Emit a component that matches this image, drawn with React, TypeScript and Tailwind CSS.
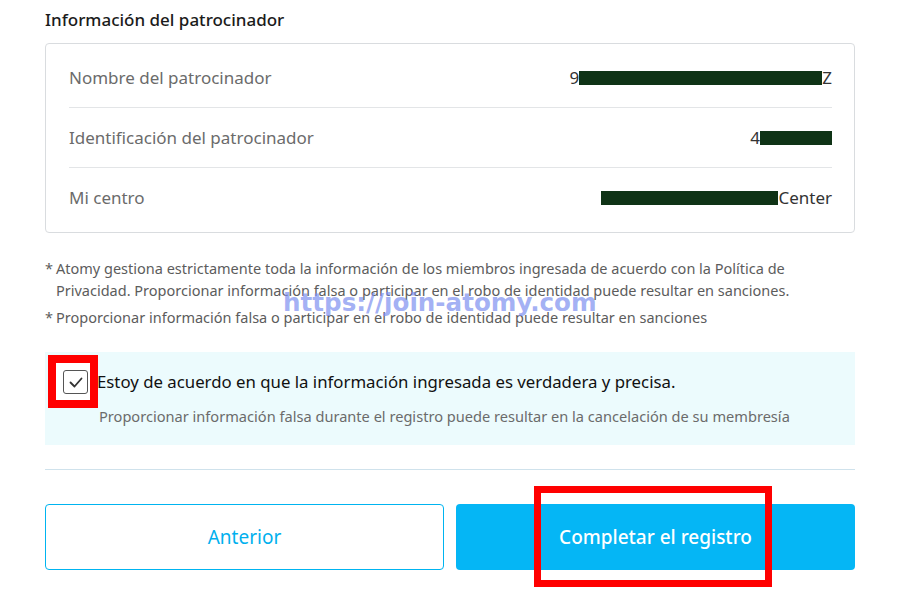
const rows = [
  { label: 'Nombre del patrocinador', pre: '9', block: 243, post: 'Z' },
  { label: 'Identificación del patrocinador', pre: '4', block: 72, post: '' },
  { label: 'Mi centro', pre: '', block: 177, post: 'Center' },
];

function Redacted({ pre, block, post }: { pre: string; block: number; post: string }) {
  return (
    <div className="flex items-center text-[17px] text-[#333]">
      {pre && <span>{pre}</span>}
      <span className="inline-block h-[14px] bg-[#0f3316]" style={{ width: block }} />
      {post && <span>{post}</span>}
    </div>
  );
}

export default function App() {
  return (
    <div className="relative min-h-[605px] bg-white px-[45px] pt-[8px] font-['Noto_Sans',sans-serif]">
      <h2 className="text-[17px] leading-[24px] font-medium text-[#1b1b1b]">Información del patrocinador</h2>

      <div className="mt-[11px] rounded-[4px] border border-[#d9dcdf] pl-[23px] pr-[22px] py-[4px]">
        {rows.map((r, i) => (
          <div
            key={r.label}
            className={`flex h-[60px] items-center justify-between ${i < rows.length - 1 ? 'border-b border-[#e3e5e7]' : ''}`}
          >
            <span className="text-[17px] text-[#6b6b6b]">{r.label}</span>
            <Redacted pre={r.pre} block={r.block} post={r.post} />
          </div>
        ))}
      </div>

      <div className="mt-[24px] text-[14.5px] leading-[22px] text-[#5c5c5c]">
        <div className="flex">
          <span className="w-[11px] shrink-0">*</span>
          <p>
            Atomy gestiona estrictamente toda la información de los miembros ingresada de acuerdo con la Política de
            <br />
            Privacidad. Proporcionar información falsa o participar en el robo de identidad puede resultar en sanciones.
          </p>
        </div>
        <div className="mt-[5px] flex">
          <span className="w-[11px] shrink-0">*</span>
          <p>Proporcionar información falsa o participar en el robo de identidad puede resultar en sanciones</p>
        </div>
      </div>

      <div className="relative mt-[24px] bg-[#ecfbfd] pb-[19px] pl-[18px] pt-[18px]">
        <div className="absolute left-[3px] top-[3px] h-[53px] w-[50px] border-[8px] border-[#ff0000] bg-white" />
        <div className="flex items-center gap-[9px]">
          <span className="relative flex h-[24px] w-[25px] items-center justify-center rounded-[3px] border border-[#555] bg-white">
            <svg width="14" height="11" viewBox="0 0 14 11" fill="none">
              <path d="M1.5 5.5l4 4 7-8" stroke="#333" strokeWidth="1.8" strokeLinecap="round" strokeLinejoin="round" />
            </svg>
          </span>
          <span className="text-[16.8px] leading-[24px] text-[#111]">
            Estoy de acuerdo en que la información ingresada es verdadera y precisa.
          </span>
        </div>
        <p className="ml-[36px] mt-[12px] text-[14.6px] leading-[20px] text-[#6b6b6b]">
          Proporcionar información falsa durante el registro puede resultar en la cancelación de su membresía
        </p>
      </div>

      <div className="mt-[24px] border-t border-[#cfe2ec]" />

      <div className="mt-[34px] grid grid-cols-2 gap-[12px]">
        <button className="h-[66px] rounded-[4px] border border-[#00b4f0] bg-white text-[19px] text-[#00b0ee]">
          Anterior
        </button>
        <div className="relative">
          <button className="h-[66px] w-full rounded-[4px] bg-[#05b6f5] text-[19px] font-medium text-white">
            Completar el registro
          </button>
          <div className="pointer-events-none absolute left-[78px] top-[-18px] h-[101px] w-[238px] border-[7px] border-[#ff0000]" />
        </div>
      </div>

      <div className="pointer-events-none absolute left-[283px] top-[289px] font-['DejaVu_Sans',sans-serif] text-[24.6px] font-bold leading-[28px] text-[#7b8ef0]/70">
        https://join-atomy.com
      </div>
    </div>
  );
}
